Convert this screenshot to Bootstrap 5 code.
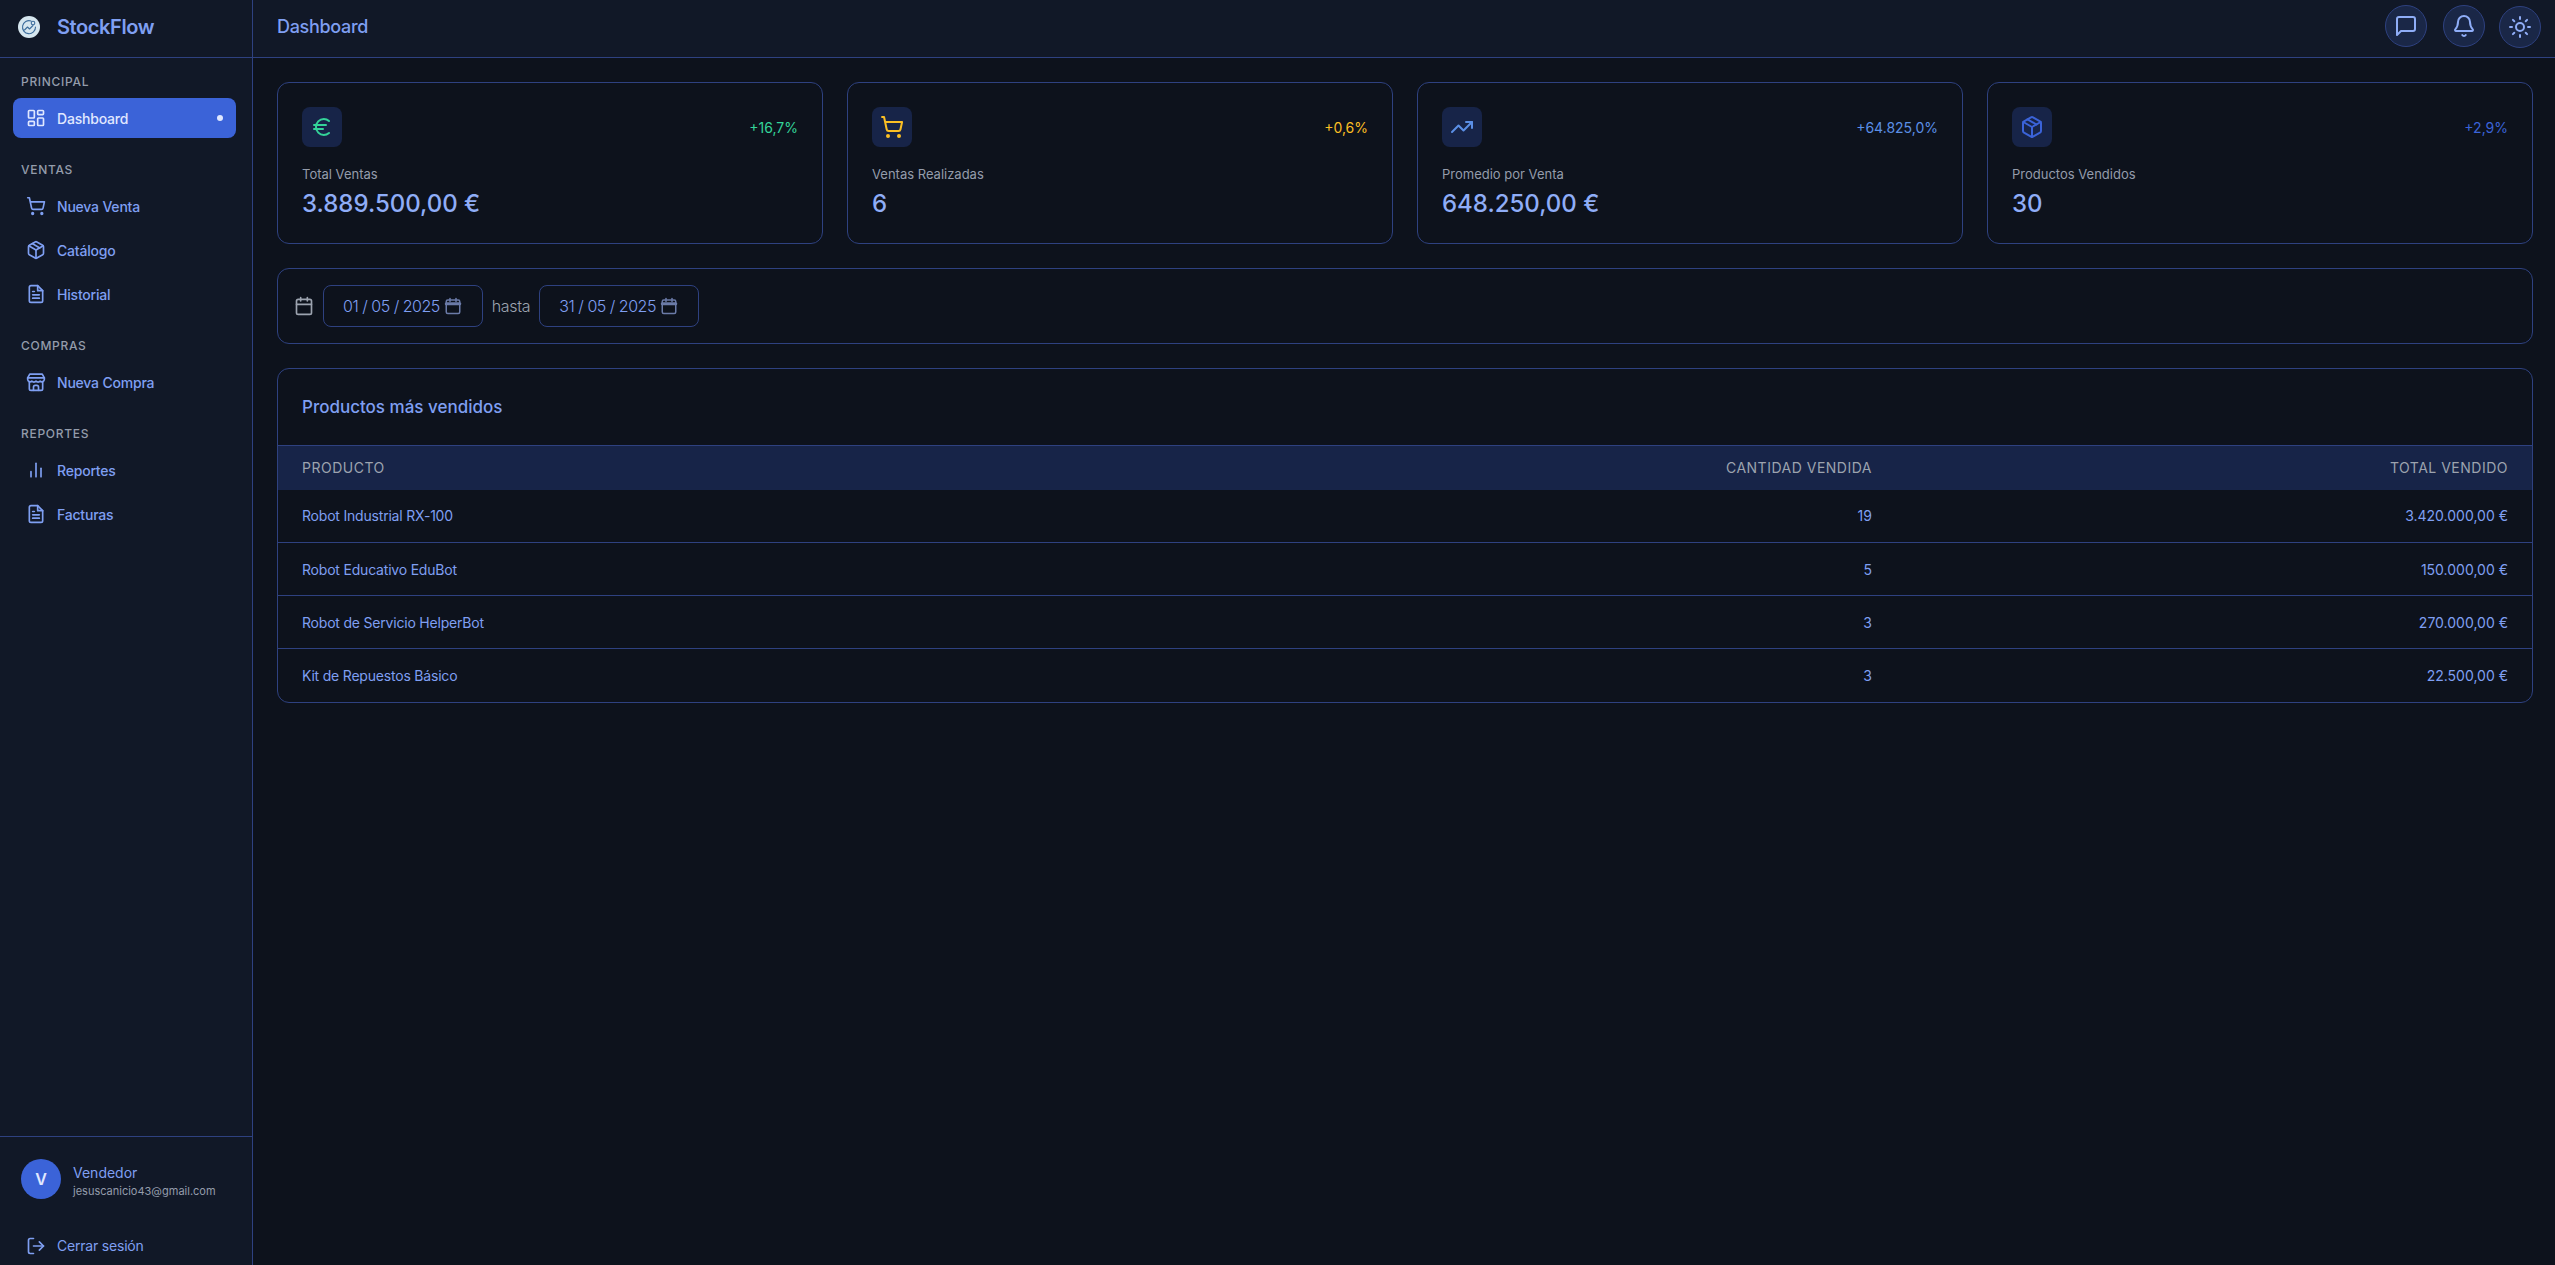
<!DOCTYPE html>
<html lang="es">
<head>
    <meta charset="UTF-8">
    <meta name="viewport" content="width=device-width, initial-scale=1">
    <title>StockFlow - Dashboard</title>
    <link href="https://cdn.jsdelivr.net/npm/bootstrap@5.3.0/dist/css/bootstrap.min.css" rel="stylesheet">
    <style>
        body {
            font-family: Inter, "Liberation Sans", sans-serif;
            background-color: #0d121c;
            color: #7f9ff2;
            height: 1265px;
            overflow: hidden;
        }
        .ico {
            width: 20px;
            height: 20px;
            fill: none;
            stroke: currentColor;
            stroke-width: 2;
            stroke-linecap: round;
            stroke-linejoin: round;
            flex-shrink: 0;
        }
        .ico-lg {
            width: 24px;
            height: 24px;
        }
        .ico-sm {
            width: 18px;
            height: 18px;
        }

        /* Sidebar */
        .side-panel {
            width: 253px;
            height: 1265px;
            background-color: #111827;
            border-right: 1px solid #2e4180;
        }
        .brand-row {
            height: 58px;
            padding: 0 0 4px 18px;
            gap: 17px;
            border-bottom: 1px solid #2e4180;
        }
        .brand-name {
            font-size: 20px;
            font-weight: 600;
            color: #7f9ff2;
            letter-spacing: -0.4px;
        }
        .side-nav {
            padding: 15px 16px 0 13px;
        }
        .side-label {
            font-size: 12px;
            font-weight: 500;
            line-height: 18px;
            letter-spacing: 0.7px;
            color: #949cab;
            padding-left: 8px;
            margin-bottom: 7px;
        }
        .side-group {
            margin-bottom: 23px;
        }
        .side-link {
            height: 40px;
            margin-bottom: 4px;
            padding: 0 13px;
            gap: 11px;
            border-radius: 8px;
            font-size: 14px;
            font-weight: 500;
            letter-spacing: -0.2px;
            color: #7f9ff2;
            text-decoration: none;
        }
        .side-link.active-link {
            background-color: #3b63d8;
            color: #e0e8ff;
        }
        .active-dot {
            width: 6px;
            height: 6px;
            border-radius: 50%;
            background-color: #e0e8ff;
        }
        .side-foot {
            border-top: 1px solid #2e4180;
            padding: 22px 21px 0;
            height: 129px;
        }
        .user-avatar {
            width: 40px;
            height: 40px;
            border-radius: 50%;
            background-color: #3b63d8;
            color: #e0e8ff;
            font-size: 16px;
            font-weight: 600;
        }
        .user-info {
            padding-top: 3px;
        }
        .user-name {
            font-size: 14px;
            line-height: 20px;
            font-weight: 400;
        }
        .user-mail {
            font-size: 11px;
            line-height: 16px;
            color: #949cab;
        }
        .logout-link {
            margin-top: 36px;
            margin-left: 5px;
            gap: 11px;
            font-size: 14px;
            letter-spacing: -0.2px;
            color: #7f9ff2;
            text-decoration: none;
        }

        /* Top bar */
        .top-bar {
            height: 58px;
            background-color: #111827;
            border-bottom: 1px solid #2e4180;
            padding: 0 14px 4px 24px;
        }
        .top-title {
            font-size: 18px;
            font-weight: 500;
            letter-spacing: -0.3px;
            color: #7f9ff2;
        }
        .round-btn {
            width: 42px;
            height: 42px;
            border-radius: 50%;
            border: 1px solid #2e4180;
            background-color: #1a2747;
            color: #8fadf7;
        }
        .theme-btn {
            margin-top: 1px;
            margin-left: -2px;
        }

        /* Content */
        .page-body {
            padding: 24px 22px 24px 24px;
        }
        .panel-box {
            background-color: #0d121c;
            border: 1px solid #2e4180;
            border-radius: 12px;
        }
        .stat-grid {
            display: grid;
            grid-template-columns: repeat(4, 1fr);
            gap: 24px;
            margin-bottom: 24px;
        }
        .stat-box {
            padding: 24px 24px 23px;
        }
        .stat-icon {
            width: 40px;
            height: 40px;
            border-radius: 8px;
            background-color: #172448;
        }
        .stat-change {
            font-size: 14px;
            font-weight: 400;
        }
        .stat-label {
            margin-top: 17px;
            font-size: 13px;
            line-height: 20px;
            color: #949cab;
        }
        .stat-value {
            margin-top: 4px;
            font-size: 24px;
            line-height: 32px;
            font-weight: 500;
            color: #8fadf7;
        }
        .tone-green { color: #34d399; }
        .tone-yellow { color: #fbbf24; }
        .tone-sky { color: #5b8fe6; }
        .tone-blue { color: #3b63d8; }

        .date-box {
            height: 76px;
            padding: 0 16px;
            margin-bottom: 24px;
            gap: 9px;
        }
        .date-field {
            height: 42px;
            padding: 0 20px 0 19px;
            gap: 4px;
            background-color: #0d121c;
            border: 1px solid #2e4180;
            border-radius: 8px;
            font-size: 16px;
            font-weight: 300;
            letter-spacing: -0.5px;
            color: #7f9ff2;
        }
        .date-to {
            font-size: 16px;
            font-weight: 300;
            letter-spacing: -0.3px;
            color: #9ca3af;
        }
        .tone-muted { color: #9ca3af; }
        .tone-slate { color: #6b7ba8; }

        .table-head {
            height: 76px;
            padding: 2px 0 0 24px;
            font-size: 17px;
            font-weight: 500;
            color: #7f9ff2;
        }
        .sales-table {
            --bs-table-bg: transparent;
            --bs-table-color: #7f9ff2;
            --bs-table-border-color: #2e4180;
            margin-bottom: 0;
        }
        .sales-table th {
            height: 44px;
            background-color: #172448;
            border-top: 1px solid #2e4180;
            border-bottom: 0;
            padding: 0 24px;
            vertical-align: middle;
            font-size: 14px;
            font-weight: 400;
            letter-spacing: 0.5px;
            text-transform: uppercase;
            color: #9ca3af;
        }
        .sales-table th:last-child {
            width: 636px;
        }
        .sales-table td {
            height: 53px;
            padding: 0 24px;
            vertical-align: middle;
            font-size: 14px;
            font-weight: 400;
            color: #7f9ff2;
        }
        .sales-table td:first-child {
            letter-spacing: -0.2px;
        }
        .sales-table tr:last-child td {
            border-bottom: 0;
        }
    </style>
</head>
<body>
<div class="d-flex">

    <!-- Sidebar -->
    <aside class="side-panel d-flex flex-column flex-shrink-0">
        <div class="brand-row d-flex align-items-center">
            <svg width="22" height="22" viewBox="0 0 22 22" fill="none" stroke="#3d6d9c" stroke-width="1.1" stroke-linecap="round" stroke-linejoin="round">
                <circle cx="11" cy="11" r="11" fill="#d6e6ef" stroke="none"/>
                <path d="M13 5a6.5 6.5 0 1 0 4.5 6"/>
                <circle cx="15" cy="7" r="1.8"/>
                <path d="M6.5 14l3-3 2 2 3.5-3.5"/>
            </svg>
            <span class="brand-name">StockFlow</span>
        </div>

        <nav class="side-nav flex-grow-1">
            <div class="side-group">
                <div class="side-label">PRINCIPAL</div>
                <a href="#" class="side-link active-link d-flex align-items-center">
                    <svg class="ico" viewBox="0 0 24 24"><rect x="3" y="3" width="7" height="9" rx="1"/><rect x="14" y="3" width="7" height="5" rx="1"/><rect x="14" y="12" width="7" height="9" rx="1"/><rect x="3" y="16" width="7" height="5" rx="1"/></svg>
                    <span class="flex-grow-1">Dashboard</span>
                    <span class="active-dot"></span>
                </a>
            </div>
            <div class="side-group">
                <div class="side-label">VENTAS</div>
                <a href="#" class="side-link d-flex align-items-center">
                    <svg class="ico" viewBox="0 0 24 24"><circle cx="8" cy="21" r="1"/><circle cx="19" cy="21" r="1"/><path d="M2.05 2.05h2l2.66 12.42a2 2 0 0 0 2 1.58h9.78a2 2 0 0 0 1.95-1.57l1.65-7.43H5.12"/></svg>
                    <span>Nueva Venta</span>
                </a>
                <a href="#" class="side-link d-flex align-items-center">
                    <svg class="ico" viewBox="0 0 24 24"><path d="M21 8a2 2 0 0 0-1-1.7l-7-4a2 2 0 0 0-2 0l-7 4A2 2 0 0 0 3 8v8a2 2 0 0 0 1 1.7l7 4a2 2 0 0 0 2 0l7-4a2 2 0 0 0 1-1.7z"/><path d="M3.3 7L12 12l8.7-5"/><path d="M12 22V12"/><path d="M7.5 4.3l9 5.2"/></svg>
                    <span>Catálogo</span>
                </a>
                <a href="#" class="side-link d-flex align-items-center">
                    <svg class="ico" viewBox="0 0 24 24"><path d="M14 2H6a2 2 0 0 0-2 2v16a2 2 0 0 0 2 2h12a2 2 0 0 0 2-2V8z"/><path d="M14 2v6h6"/><path d="M16 13H8"/><path d="M16 17H8"/><path d="M10 9H8"/></svg>
                    <span>Historial</span>
                </a>
            </div>
            <div class="side-group">
                <div class="side-label">COMPRAS</div>
                <a href="#" class="side-link d-flex align-items-center">
                    <svg class="ico" viewBox="0 0 24 24"><path d="M2 7l2.5-4.5h15L22 7"/><path d="M2 7h20v2a3 3 0 0 1-5 2 3.5 3.5 0 0 1-5 0 3.5 3.5 0 0 1-5 0 3 3 0 0 1-5-2z"/><path d="M4 12v8a2 2 0 0 0 2 2h12a2 2 0 0 0 2-2v-8"/><path d="M9 22v-4a2 2 0 0 1 2-2h2a2 2 0 0 1 2 2v4"/></svg>
                    <span>Nueva Compra</span>
                </a>
            </div>
            <div class="side-group">
                <div class="side-label">REPORTES</div>
                <a href="#" class="side-link d-flex align-items-center">
                    <svg class="ico" viewBox="0 0 24 24"><path d="M18 20V10"/><path d="M12 20V4"/><path d="M6 20v-6"/></svg>
                    <span>Reportes</span>
                </a>
                <a href="#" class="side-link d-flex align-items-center">
                    <svg class="ico" viewBox="0 0 24 24"><path d="M14 2H6a2 2 0 0 0-2 2v16a2 2 0 0 0 2 2h12a2 2 0 0 0 2-2V8z"/><path d="M14 2v6h6"/><path d="M16 13H8"/><path d="M16 17H8"/><path d="M10 9H8"/></svg>
                    <span>Facturas</span>
                </a>
            </div>
        </nav>

        <div class="side-foot">
            <div class="d-flex align-items-center gap-2">
                <div class="user-avatar d-flex align-items-center justify-content-center">V</div>
                <div class="user-info ms-1">
                    <div class="user-name">Vendedor</div>
                    <div class="user-mail">jesuscanicio43@gmail.com</div>
                </div>
            </div>
            <a href="#" class="logout-link d-flex align-items-center">
                <svg class="ico" viewBox="0 0 24 24"><path d="M9 21H5a2 2 0 0 1-2-2V5a2 2 0 0 1 2-2h4"/><path d="M16 17l5-5-5-5"/><path d="M21 12H9"/></svg>
                <span>Cerrar sesión</span>
            </a>
        </div>
    </aside>

    <!-- Main -->
    <main class="flex-grow-1">
        <header class="top-bar d-flex align-items-center justify-content-between">
            <div class="top-title">Dashboard</div>
            <div class="d-flex gap-3">
                <button class="round-btn d-flex align-items-center justify-content-center p-0" type="button" aria-label="Mensajes">
                    <svg class="ico ico-lg" viewBox="0 0 24 24"><path d="M21 15a2 2 0 0 1-2 2H7l-4 4V5a2 2 0 0 1 2-2h14a2 2 0 0 1 2 2z"/></svg>
                </button>
                <button class="round-btn d-flex align-items-center justify-content-center p-0" type="button" aria-label="Notificaciones">
                    <svg class="ico ico-lg" viewBox="0 0 24 24"><path d="M10.27 21a2 2 0 0 0 3.46 0"/><path d="M3.26 15.33A1 1 0 0 0 4 17h16a1 1 0 0 0 .74-1.67C19.41 13.96 18 12.5 18 8A6 6 0 0 0 6 8c0 4.5-1.41 5.96-2.74 7.33"/></svg>
                </button>
                <button class="round-btn theme-btn d-flex align-items-center justify-content-center p-0" type="button" aria-label="Tema">
                    <svg class="ico ico-lg" viewBox="0 0 24 24"><circle cx="12" cy="12" r="4"/><path d="M12 2v2"/><path d="M12 20v2"/><path d="M4.9 4.9l1.4 1.4"/><path d="M17.7 17.7l1.4 1.4"/><path d="M2 12h2"/><path d="M20 12h2"/><path d="M6.3 17.7l-1.4 1.4"/><path d="M19.1 4.9l-1.4 1.4"/></svg>
                </button>
            </div>
        </header>

        <div class="page-body">
            <div class="stat-grid">
                <div class="panel-box stat-box">
                    <div class="d-flex justify-content-between align-items-center">
                        <div class="stat-icon tone-green d-flex align-items-center justify-content-center">
                            <svg class="ico ico-lg" viewBox="0 0 24 24"><path d="M4 10h12"/><path d="M4 14h9"/><path d="M19 6a7.7 7.7 0 0 0-5.2-2A7.9 7.9 0 0 0 6 12c0 4.4 3.5 8 7.8 8 2 0 3.8-.8 5.2-2"/></svg>
                        </div>
                        <span class="stat-change tone-green">+16,7%</span>
                    </div>
                    <div class="stat-label">Total Ventas</div>
                    <div class="stat-value">3.889.500,00 €</div>
                </div>
                <div class="panel-box stat-box">
                    <div class="d-flex justify-content-between align-items-center">
                        <div class="stat-icon tone-yellow d-flex align-items-center justify-content-center">
                            <svg class="ico ico-lg" viewBox="0 0 24 24"><circle cx="8" cy="21" r="1"/><circle cx="19" cy="21" r="1"/><path d="M2.05 2.05h2l2.66 12.42a2 2 0 0 0 2 1.58h9.78a2 2 0 0 0 1.95-1.57l1.65-7.43H5.12"/></svg>
                        </div>
                        <span class="stat-change tone-yellow">+0,6%</span>
                    </div>
                    <div class="stat-label">Ventas Realizadas</div>
                    <div class="stat-value">6</div>
                </div>
                <div class="panel-box stat-box">
                    <div class="d-flex justify-content-between align-items-center">
                        <div class="stat-icon tone-sky d-flex align-items-center justify-content-center">
                            <svg class="ico ico-lg" viewBox="0 0 24 24"><path d="M22 7l-8.5 8.5-5-5L2 17"/><path d="M16 7h6v6"/></svg>
                        </div>
                        <span class="stat-change tone-sky">+64.825,0%</span>
                    </div>
                    <div class="stat-label">Promedio por Venta</div>
                    <div class="stat-value">648.250,00 €</div>
                </div>
                <div class="panel-box stat-box">
                    <div class="d-flex justify-content-between align-items-center">
                        <div class="stat-icon tone-blue d-flex align-items-center justify-content-center">
                            <svg class="ico ico-lg" viewBox="0 0 24 24"><path d="M21 8a2 2 0 0 0-1-1.7l-7-4a2 2 0 0 0-2 0l-7 4A2 2 0 0 0 3 8v8a2 2 0 0 0 1 1.7l7 4a2 2 0 0 0 2 0l7-4a2 2 0 0 0 1-1.7z"/><path d="M3.3 7L12 12l8.7-5"/><path d="M12 22V12"/><path d="M7.5 4.3l9 5.2"/></svg>
                        </div>
                        <span class="stat-change tone-blue">+2,9%</span>
                    </div>
                    <div class="stat-label">Productos Vendidos</div>
                    <div class="stat-value">30</div>
                </div>
            </div>

            <div class="panel-box date-box d-flex align-items-center">
                <svg class="ico tone-muted" viewBox="0 0 24 24"><rect x="3" y="4" width="18" height="18" rx="2"/><path d="M16 2v4"/><path d="M8 2v4"/><path d="M3 10h18"/></svg>
                <div class="date-field d-flex align-items-center">
                    <span>01 / 05 / 2025</span>
                    <svg class="ico ico-sm tone-slate" viewBox="0 0 24 24"><rect x="3" y="4" width="18" height="18" rx="2"/><path d="M16 2v4"/><path d="M8 2v4"/><path d="M3 9h18" stroke-width="4"/></svg>
                </div>
                <span class="date-to">hasta</span>
                <div class="date-field d-flex align-items-center">
                    <span>31 / 05 / 2025</span>
                    <svg class="ico ico-sm tone-slate" viewBox="0 0 24 24"><rect x="3" y="4" width="18" height="18" rx="2"/><path d="M16 2v4"/><path d="M8 2v4"/><path d="M3 9h18" stroke-width="4"/></svg>
                </div>
            </div>

            <div class="panel-box overflow-hidden">
                <div class="table-head d-flex align-items-center">Productos más vendidos</div>
                <table class="table sales-table">
                    <thead>
                        <tr>
                            <th>Producto</th>
                            <th class="text-end">Cantidad Vendida</th>
                            <th class="text-end">Total Vendido</th>
                        </tr>
                    </thead>
                    <tbody>
                        <tr><td>Robot Industrial RX-100</td><td class="text-end">19</td><td class="text-end">3.420.000,00 €</td></tr>
                        <tr><td>Robot Educativo EduBot</td><td class="text-end">5</td><td class="text-end">150.000,00 €</td></tr>
                        <tr><td>Robot de Servicio HelperBot</td><td class="text-end">3</td><td class="text-end">270.000,00 €</td></tr>
                        <tr><td>Kit de Repuestos Básico</td><td class="text-end">3</td><td class="text-end">22.500,00 €</td></tr>
                    </tbody>
                </table>
            </div>
        </div>
    </main>
</div>
<script src="https://cdn.jsdelivr.net/npm/bootstrap@5.3.0/dist/js/bootstrap.bundle.min.js"></script>
</body>
</html>
